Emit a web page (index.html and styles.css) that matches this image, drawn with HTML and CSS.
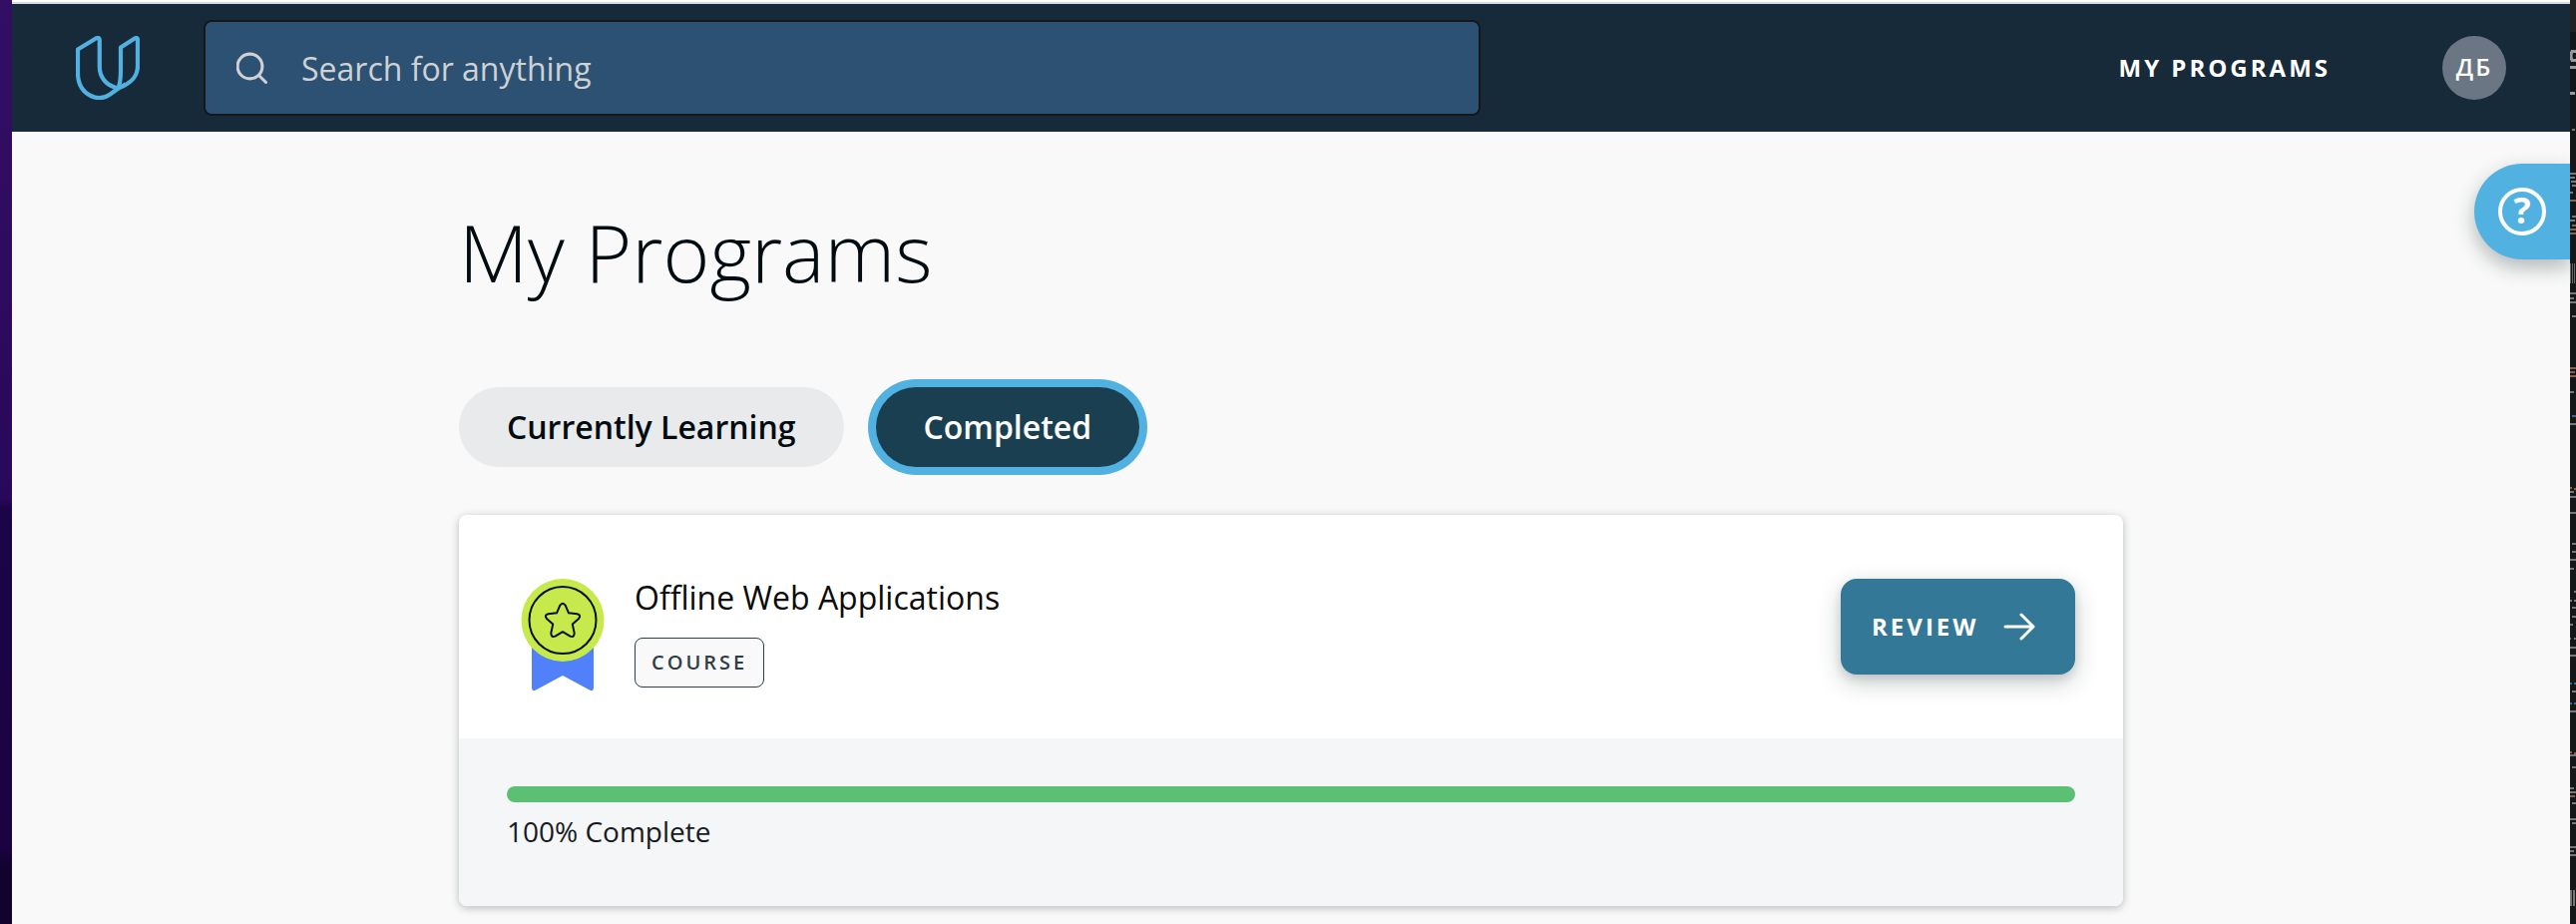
FILE: index.html
```html
<!DOCTYPE html>
<html lang="en">
<head>
<meta charset="utf-8">
<title>My Programs</title>
<link rel="stylesheet" href="styles.css">
</head>
<body>
<div class="desktop">
  <div class="window">
    <header class="topbar">
      <svg class="logo" viewBox="0 0 64 64" fill="none" stroke="#51b1e1" stroke-width="4.2" stroke-linejoin="round">
        <path d="M2 13.5 20.5 2.3Q23.8 1 23.8 4V31C23.8 41.500 30.500 48.800 38.500 51.300Q42.500 53 47 50.500C56 46 62 40.500 62 30V4Q62 1 59 2.500L45 11.500V34C45 43 44.500 49 42 53L34 58.700C28 62.800 21 63 15 60C6 55.500 2 47 2 37Z"/>
        <path d="M42 53 50 48.300"/>
      </svg>
      <div class="search">
        <svg class="search-icon" viewBox="0 0 32 32" fill="none" stroke="#cfd1d4" stroke-width="3.100" stroke-linecap="round"><circle cx="13.500" cy="14.500" r="12.400"/><path d="m22.500 23.500 7 7"/></svg>
        <span>Search for anything</span>
      </div>
      <nav class="nav"><a class="nav-link">MY PROGRAMS</a><span class="avatar">ДБ</span></nav>
    </header>
    <main class="content">
      <h1 class="title">My Programs</h1>
      <div class="tabs"><button class="tab">Currently Learning</button><button class="tab tab-active">Completed</button></div>
      <article class="card">
        <div class="card-main">
          <svg class="badge" viewBox="0 0 84 112">
            <path d="M11 50H73V109Q73 113.500 69 111.500L42 97 15 111.500Q11 113.500 11 109Z" fill="#5080fa"/>
            <circle cx="42" cy="41.500" r="41.500" fill="#c6e94b"/>
            <circle cx="42" cy="41.500" r="33.500" fill="none" stroke="#0a0f0d" stroke-width="2"/>
            <path d="M39.200 26.800Q42 22.500 44.800 26.800L48 34.300 56.500 35.200Q61 36.500 58 40L51.800 45.600 53.700 54.500Q53.500 59.200 49.500 57.600L42 53.200 34.500 57.600Q30.500 59.200 30.300 54.500L32.200 45.600 26 40Q23 36.500 27.500 35.200L36 34.300Z" fill="none" stroke="#0a0f0d" stroke-width="2" stroke-linejoin="round"/>
          </svg>
          <div class="info"><h2 class="name">Offline Web Applications</h2><span class="tag">COURSE</span></div>
          <button class="review"><span class="review-label">REVIEW</span><svg class="arrow" viewBox="0 0 32 28" fill="none" stroke="#fff" stroke-width="3" stroke-linecap="round" stroke-linejoin="round"><path d="M2 14H30M18 2 30 14 18 26"/></svg></button>
        </div>
        <div class="card-progress"><div class="track"><div class="bar" style="width:100%"></div></div><p class="status">100% Complete</p></div>
      </article>
    </main>
    <div class="help"><svg class="help-ring" viewBox="0 0 48 48" fill="none" stroke="#fff" stroke-width="4"><circle cx="24" cy="24" r="22"/></svg><span class="help-mark">?</span></div>
  </div>
  <svg class="side" viewBox="0 0 6 926" fill="none">
    <path d="M0 0H6V32H0Z" fill="#222"/>
    <g stroke="#999" stroke-width="3"><path d="M6 51.500H2Q0 56 2 60.500H6M0 67.500H6M0 93.500H5"/></g>
    <g stroke="#777" stroke-width="2"><path d="M2 130H5M0 174H6M0 178H5M1 182H6M2 186H6M0 193H3M2 217H6M0 221H5M0 294H6M0 299H4M0 303H6M2 317H6M0 393H4M0 425H6M0 493H4M0 498H6M0 514H6M2 545H6M2 553H6M0 561H6M0 570H4M4 593H6M0 602H2M4 602H6M2 609H6M2 618H6M0 626H3M0 640H1M4 640H6M0 649H6M0 657H6M2 693H6M0 713H6M0 757H6M2 769H6M0 790H4M0 794H6M2 805H6M0 821H6M2 825H6M0 849H6M0 853H4M0 857H6"/></g>
    <g stroke="#666" stroke-width="20" stroke-dasharray="1"><path d="M0 274H6"/></g>
    <g stroke="#777" stroke-width="16" stroke-dasharray="2 1"><path d="M0 900H6"/></g>
    <g stroke="#85604e" stroke-width="2"><path d="M0 201H6M2 226H6M0 230H6M0 234H6M0 369H6M0 373H5M0 377H6M0 489H2M4 490H6M0 754H2M4 755H6M0 798H5"/></g>
    <g stroke="#3c6590" stroke-width="2"><path d="M2 417H6M0 685H2M4 685H6M0 705H2M4 705H6"/></g>
  </svg>
</div>
</body>
</html>
```
FILE: styles.css
```css
* { box-sizing: border-box; }
body, h1, h2, p { margin: 0; }
body { font-family: "Open Sans", "Noto Sans", sans-serif; overflow: hidden; }
button { border: 0; font-family: inherit; }
.desktop { display: flex; width: 2582px; height: 926px; padding-left: 12px; background: linear-gradient(#330f63 0, #28085a 500px, #1b0447 510px, #1b0342 850px, #11022e 870px); }
.window { position: relative; width: 2564px; background: #f9f9f9; border-top: 2px solid #fff; overflow: hidden; }
.side { width: 6px; height: 926px; flex: none; background: #141718; }
.topbar { display: flex; align-items: center; height: 130px; border-top: 2px solid #d9dbdb; background: #172a3a; padding: 0 64px; }
.logo { width: 64px; height: 64px; margin-right: 64px; flex: none; }
.search { display: flex; align-items: center; width: 1280px; height: 96px; border: 2px solid #14181c; border-radius: 8px; background: #2c5172; color: #cfd1d4; font-size: 32px; padding-left: 31px; }
.search-icon { width: 32px; height: 32px; margin-right: 33px; }
.nav { display: flex; align-items: center; margin-left: auto; }
.nav-link { color: #fff; font-size: 24px; font-weight: 700; letter-spacing: 3px; margin-right: 112px; padding-bottom: 2px; }
.avatar { width: 64px; height: 64px; border-radius: 50%; background: #6a7684; color: #fff; font-size: 24px; line-height: 62px; font-weight: 600; letter-spacing: 2px; text-align: center; }
.content { width: 1668px; margin-left: 448px; padding-top: 65px; }
.title { font-size: 80px; font-weight: 300; line-height: 110px; color: #020b10; }
.tabs { display: flex; gap: 32px; margin-top: 81px; }
.tab { height: 80px; padding: 0 48px 2px; border-radius: 40px; background: #e9eaeb; color: #020b10; font-size: 32px; font-weight: 600; white-space: nowrap; }
.tab-active { background: #193f50; color: #fff; box-shadow: 0 0 0 8px #51b1e1; }
.card { margin-top: 48px; height: 392px; border-radius: 8px; background: #fff; box-shadow: 0 2px 8px rgba(10, 30, 30, .28); overflow: hidden; }
.card-main { display: flex; align-items: flex-start; height: 224px; padding: 64px 48px 0 62px; }
.badge { width: 84px; height: 112px; flex: none; }
.info { margin-left: 30px; }
.name { font-size: 32px; font-weight: 400; line-height: 44px; color: #0b0b0b; margin-top: -3px; }
.tag { display: block; width: 130px; height: 50px; margin-top: 18px; padding-left: 16px; border: 1px solid #2e3d49; border-radius: 8px; background: #f9f9f9; color: #2e3d49; font-size: 20px; font-weight: 600; line-height: 47px; letter-spacing: 3px; }
.review { display: flex; align-items: center; justify-content: space-between; width: 235px; height: 96px; margin-left: auto; padding: 0 40px 0 31px; border-radius: 16px; background: #337896; color: #fff; font-size: 24px; font-weight: 700; letter-spacing: 3px; box-shadow: 0 8px 24px rgba(10, 30, 30, .22), 0 4px 8px rgba(10, 30, 30, .12); }
.review-label { padding-bottom: 2px; }
.arrow { width: 32px; height: 28px; }
.card-progress { height: 168px; background: #f4f6f8; padding: 48px; }
.track { height: 16px; border-radius: 8px; overflow: hidden; }
.bar { height: 16px; background: #5bc074; }
.status { margin-top: 10px; font-size: 28px; line-height: 38px; color: #171a20; }
.help { position: absolute; top: 162px; right: 0; display: grid; place-items: center; width: 96px; height: 96px; border-radius: 48px 0 0 48px; background: #51b1e1; box-shadow: 0 8px 20px rgba(10, 30, 30, .3); }
.help-ring { grid-area: 1 / 1; width: 48px; height: 48px; }
.help-mark { grid-area: 1 / 1; color: #fff; font-size: 36px; font-weight: 700; line-height: 48px; padding-bottom: 3px; }
```
